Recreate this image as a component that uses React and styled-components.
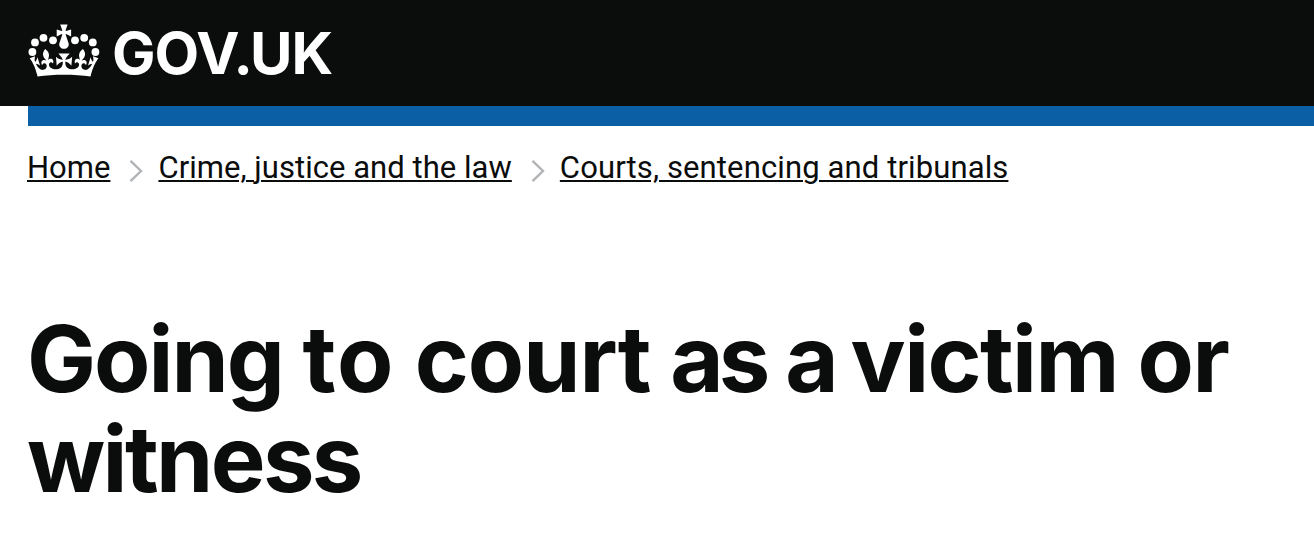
import styled, { createGlobalStyle } from "styled-components";

const GlobalStyle = createGlobalStyle`
    body {
        margin: 0;
        background: #ffffff;
        color: #0b0c0c;
        overflow: hidden;
    }
`

const Header = styled.header`
    display: flex;
    align-items: flex-start;
    height: 106px;
    padding-left: 28px;
    box-sizing: border-box;
    background: #0b0c0c;
`

const LogoLink = styled.a`
    display: flex;
    align-items: flex-start;
    gap: 12px;
    padding-top: 24px;
    color: #ffffff;
    text-decoration: none;
`

const Crown = styled.svg`
    display: block;
    width: 72px;
    height: 53px;
    fill: #ffffff;
`

const LogoText = styled.span`
    display: flex;
    font-family: "Inter", "Liberation Sans", sans-serif;
    font-size: 58px;
    font-weight: 700;
    line-height: 58px;
    white-space: nowrap;
`

const Letter = styled.span`
    margin-right: ${({ $kern }) => $kern || 0}px;
`

const BlueBar = styled.div`
    height: 20px;
    margin-left: 28px;
    background: #0b5fa5;
`

const Breadcrumbs = styled.ol`
    display: flex;
    align-items: flex-start;
    margin: 0;
    padding: 24px 0 0 27px;
    list-style: none;
    font-family: "Roboto", "Liberation Sans", sans-serif;
    font-size: 31px;
    line-height: 36px;
    height: 159px;
    white-space: nowrap;
`

const Crumb = styled.li`
    display: flex;
    letter-spacing: ${({ $spacing }) => $spacing || 0}px;
`

const CrumbLink = styled.a`
    color: #0b0c0c;
    text-decoration: underline;
    text-decoration-thickness: 2px;
    text-underline-offset: 2px;
`

const Chevron = styled.svg`
    width: 14px;
    height: 24px;
    margin: 9px 15px 0 19px;
    fill: none;
    stroke: #b1b4b6;
    stroke-width: 2.4;
`

const Title = styled.h1`
    margin: 0;
    padding-left: 27px;
    width: 1240px;
    font-family: "Inter", "Liberation Sans", sans-serif;
    font-size: 92px;
    font-weight: 700;
    line-height: 100px;
    word-spacing: -2px;
`

const Word = styled.span`
    letter-spacing: ${({ $tracking }) => $tracking}px;
`

const logoLetters = [
    { char: "G", kern: -1 },
    { char: "O", kern: -3 },
    { char: "V", kern: -6 },
    { char: ".", kern: -3 },
    { char: "U", kern: -1 },
    { char: "K", kern: 0 },
];

const crumbs = [
    { title: "Home", spacing: 0 },
    { title: "Crime, justice and the law", spacing: 0.04 },
    { title: "Courts, sentencing and tribunals", spacing: 0.12 },
];

const titleWords = [
    { text: "Going", tracking: -2 },
    { text: "to", tracking: 1.5 },
    { text: "court", tracking: -1 },
    { text: "as", tracking: -4.8 },
    { text: "a", tracking: -8 },
    { text: "victim", tracking: -1.6 },
    { text: "or", tracking: -1.5 },
    { text: "witness", tracking: -2.6 },
];

function CrownIcon() {
    return (
        <Crown viewBox="0 0 72 53" aria-hidden="true">
            <circle cx="4.4" cy="28" r="3.9" />
            <circle cx="7" cy="18.4" r="3.9" />
            <circle cx="15.5" cy="13.8" r="3.9" />
            <circle cx="25" cy="16.3" r="3.9" />
            <circle cx="47" cy="16.3" r="3.9" />
            <circle cx="56.2" cy="13.8" r="3.9" />
            <circle cx="64.8" cy="18.4" r="3.9" />
            <circle cx="67.4" cy="28" r="3.9" />
            <g transform="translate(1.1 .4) scale(1.1 1.04)">
                <path d="M33.1,9.8c.2-.1.3-.3.5-.5l4.6,2.4v-6.8l-4.6,1.5c-.1-.2-.3-.3-.5-.5l1.9-5.9h-6.7l1.9,5.9c-.2.1-.3.3-.5.5l-4.6-1.5v6.8l4.6-2.4c.1.2.3.3.5.5l-2.6,8c-.9,2.8,1.2,5.7,4.1,5.7h0c3,0,5.1-2.9,4.1-5.7l-2.6-8Z" />
            </g>
            <g transform="translate(1.7 -10) scale(1.08 1.04)">
                <path d="M37,37.9s-3.4,3.8-4.1,6.1c2.2,0,4.2-.5,6.4-2.8l-.7,8.5c-2-2.8-4.4-4.1-5.7-3.8.1,3.1.5,6.7,5.8,7.2,3.7.3,6.7-1.5,7-3.8.4-2.6-2-4.3-3.7-1.6-1.4-4.5,2.4-6.1,4.9-3.2-1.9-4.5-1.8-7.7,2.4-10.9,3,4,2.6,7.3-1.2,11.1,2.4-1.3,6.2,0,4,4.6-1.2-2.8-3.7-2.2-4.2.2-.3,1.7.7,3.7,3,4.2,1.9.3,4.7-.9,7-5.9-1.3,0-2.4.7-3.9,1.7l2.4-8c.6,2.3,1.4,3.7,2.2,4.5.6-1.6.5-2.8,0-5.3l5,1.8c-2.6,3.6-5.2,8.7-7.3,17.5-7.4-1.1-15.7-1.7-24.5-1.7h0c-8.8,0-17.1.6-24.5,1.7-2.1-8.9-4.7-13.9-7.3-17.5l5-1.8c-.5,2.5-.6,3.7,0,5.3.8-.8,1.6-2.3,2.2-4.5l2.4,8c-1.5-1-2.6-1.7-3.9-1.7,2.3,5,5.2,6.2,7,5.9,2.3-.4,3.3-2.4,3-4.2-.5-2.4-3-3.1-4.2-.2-2.2-4.6,1.6-6,4-4.6-3.7-3.7-4.2-7.1-1.2-11.1,4.2,3.2,4.3,6.4,2.4,10.9,2.5-2.8,6.3-1.3,4.9,3.2-1.8-2.7-4.1-1-3.7,1.6.3,2.3,3.3,4.1,7,3.8,5.4-.5,5.7-4.2,5.8-7.2-1.3-.2-3.7,1-5.7,3.8l-.7-8.5c2.2,2.3,4.2,2.7,6.4,2.8-.7-2.3-4.1-6.1-4.1-6.1h10.6Z" />
            </g>
        </Crown>
    );
}

function App() {
    return (
        <>
            <GlobalStyle />
            <Header>
                <LogoLink href="#" aria-label="GOV.UK">
                    <CrownIcon />
                    <LogoText>
                        {logoLetters.map(({ char, kern }) => (
                            <Letter key={char} $kern={kern}>{char}</Letter>
                        ))}
                    </LogoText>
                </LogoLink>
            </Header>
            <BlueBar />
            <nav aria-label="Breadcrumb">
                <Breadcrumbs>
                    {crumbs.map(({ title, spacing }, index) => (
                        <Crumb key={title} $spacing={spacing}>
                            {index > 0 && (
                                <Chevron viewBox="0 0 14 24" aria-hidden="true">
                                    <path d="M1.5 1.8 L12 12 L1.5 22.2" />
                                </Chevron>
                            )}
                            <CrumbLink href="#">{title}</CrumbLink>
                        </Crumb>
                    ))}
                </Breadcrumbs>
            </nav>
            <Title>
                {titleWords.map(({ text, tracking }) => (
                    <span key={text}>
                        <Word $tracking={tracking}>{text}</Word>{" "}
                    </span>
                ))}
            </Title>
        </>
    );
}

export default App;
